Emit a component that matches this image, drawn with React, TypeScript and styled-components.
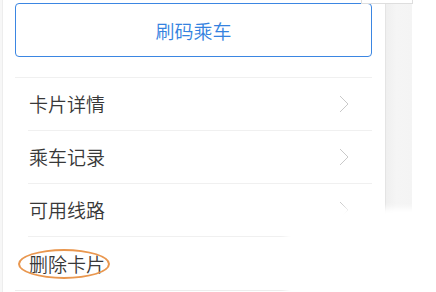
import React from 'react'
import styled, { createGlobalStyle } from 'styled-components'

const GlobalStyle = createGlobalStyle`
  html, body {
    margin: 0;
    padding: 0;
    background: #ffffff;
  }
  body {
    font-family: "Noto Sans CJK SC", "Noto Sans", sans-serif;
  }
`

const menuItems = [
  { label: '卡片详情', arrow: true },
  { label: '乘车记录', arrow: true },
  { label: '可用线路', arrow: true },
  { label: '删除卡片', arrow: false, marked: true },
]

const Chevron = () => (
  <svg width='10' height='18' viewBox='0 0 10 18'>
    <polyline points='1,1 9,9 1,17' fill='none' stroke='#c9c9c9' strokeWidth='1' />
  </svg>
)

const App: React.FC = () => {
  return (
    <Page>
      <GlobalStyle />
      <LeftEdge />
      <Card>
        <RideButton>刷码乘车</RideButton>
        <Menu>
          {menuItems.map((item) => (
            <Row key={item.label}>
              <Label $marked={item.marked}>{item.label}</Label>
              {item.arrow && <Chevron />}
            </Row>
          ))}
        </Menu>
      </Card>
      <SidePanel />
      <TopTab />
      <Fade />
    </Page>
  )
}

const Page = styled.div`
  position: relative;
  display: flex;
  width: 436px;
  height: 292px;
  overflow: hidden;
  background: #ffffff;
`
const LeftEdge = styled.div`
  width: 3px;
  border-right: 1px solid #ededed;
  box-sizing: border-box;
  background: #f7f7f7;
`
const Card = styled.div`
  width: 383px;
  box-sizing: border-box;
  padding: 3px 13px 0 12px;
  border-right: 1px solid #e4e4e4;
  display: flex;
  flex-direction: column;
`
const RideButton = styled.button`
  height: 54px;
  border: 1px solid #3b86e2;
  border-radius: 4px;
  background: #ffffff;
  color: #3482e0;
  font-family: "Noto Sans CJK SC", sans-serif;
  font-size: 19px;
  font-weight: 350;
  cursor: pointer;
`
const Menu = styled.div`
  margin-top: 20px;
  border-top: 1px solid #f0f0f0;
  border-bottom: 1px solid #ededed;
`
const Row = styled.div`
  height: 53px;
  box-sizing: border-box;
  margin-left: 13px;
  padding: 0 23px 0 1px;
  display: flex;
  align-items: center;
  justify-content: space-between;
  border-bottom: 1px solid #f0f0f0;
  &:last-child {
    border-bottom: none;
  }
`
const Label = styled.span<{ $marked?: boolean }>`
  position: relative;
  font-size: 19px;
  font-weight: 350;
  color: #383838;
  line-height: 24px;
  &::after {
    content: '';
    display: ${(p) => (p.$marked ? 'block' : 'none')};
    position: absolute;
    left: -11px;
    right: -5px;
    top: -3px;
    bottom: -3px;
    border: 2px solid #e9974f;
    border-radius: 50%;
  }
`
const SidePanel = styled.div`
  width: 26px;
  background: linear-gradient(90deg, #efefef, #f5f5f5 40%, #f4f4f4);
`
const TopTab = styled.div`
  position: absolute;
  left: 361px;
  top: -4px;
  width: 50px;
  height: 6px;
  border: 1px solid #dedede;
  background: #ffffff;
`
const Fade = styled.div`
  position: absolute;
  left: 286px;
  top: 208px;
  width: 170px;
  height: 100px;
  background: #ffffff;
  filter: blur(3px);
`

export default App
